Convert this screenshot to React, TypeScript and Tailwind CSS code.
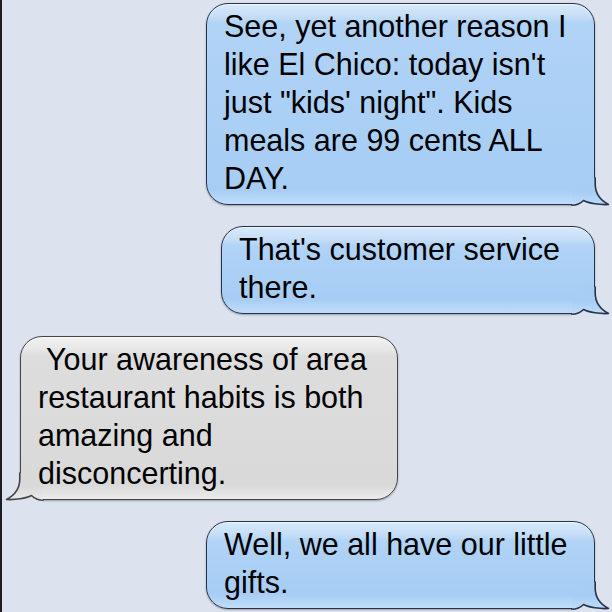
import React from "react";

type Kind = "sent" | "received";

const palette = {
  sent: {
    stroke: "#27334b",
    mid: "#a7cdf4",
    bottom: "#c0ddfa",
  },
  received: {
    stroke: "#444444",
    mid: "#d9d9d9",
    bottom: "#ececec",
  },
};

// curl drawn over the bottom corner; coords: x=26 / y=34 is the bubble's outer edge
const Tail = ({ kind }: { kind: Kind }) => {
  const c = palette[kind];
  const id = `tail-${kind}`;
  return (
    <svg
      width="40"
      height="36"
      viewBox="0 0 40 36"
      className={
        kind === "sent"
          ? "absolute -right-[15.6px] -bottom-[3.6px]"
          : "absolute -left-[15.6px] -bottom-[3.6px] -scale-x-100"
      }
    >
      <defs>
        <linearGradient id={id} x1="0" y1="0" x2="0" y2="36" gradientUnits="userSpaceOnUse">
          <stop offset="0" stopColor={c.mid} />
          <stop offset="0.55" stopColor={c.mid} />
          <stop offset="0.94" stopColor={c.bottom} />
        </linearGradient>
      </defs>
      <path
        d="M2 36 L2 33.2 C7 33.2 10.5 31.5 13.5 28.5 C19 31.5 30 33 38.5 32.5 L40 36 Z"
        fill="#dce2ee"
      />
      <path
        d="M10 6 L25.2 6 L25.2 12 C25.2 20 28 27 38.5 32.5 C30 33 19 31.5 13.5 28.5 C10.5 31.5 7 33.2 2 33.2 L2 20 Z"
        fill={`url(#${id})`}
      />
      <path
        d="M25.2 6 L25.2 12 C25.2 20 28 27 38.5 32.5 C30 33 19 31.5 13.5 28.5 C10.5 31.5 7 33.2 2 33.2"
        fill="none"
        stroke={c.stroke}
        strokeWidth="1.6"
        strokeLinejoin="round"
        strokeLinecap="round"
      />
    </svg>
  );
};

const Bubble = ({ kind, lines, width, className = "" }: { kind: Kind; lines: string[]; width: string; className?: string }) => (
  <div
    className={
      (kind === "sent"
        ? "self-end mr-[17px] border-[#27334b] bg-[linear-gradient(180deg,#d8e9fa_0px,#c4ddf7_13px,#b0d3f6_19px,#a7cdf4_calc(100%_-_14px),#c0ddfa_100%)] "
        : "self-start ml-[18px] border-[#444444] bg-[linear-gradient(180deg,#f2f2f2_0px,#e6e6e6_13px,#dddddd_19px,#d9d9d9_calc(100%_-_14px),#ececec_100%)] ") +
      "relative rounded-[22px] border-[1.6px] pl-[17px] pt-[3px] pb-[7px] shadow-[0_1px_2px_rgba(0,0,0,0.3),inset_0_1px_0_rgba(255,255,255,0.6)] " +
      width +
      " " +
      className
    }
  >
    {lines.map((l, i) => (
      <div key={i} className="whitespace-pre">
        {l}
      </div>
    ))}
    <Tail kind={kind} />
  </div>
);

export default function App() {
  return (
    <div className="w-[612px] h-[612px] overflow-hidden bg-[#dce2ee] border-l-2 border-[#1e1e22] flex flex-col pt-[3px] gap-[21px] font-['Liberation_Sans',Arial,sans-serif] text-[30.5px] leading-[38px] text-black">
      <Bubble
        kind="sent"
        width="w-[389px]"
        lines={[
          "See, yet another reason I",
          "like El Chico: today isn't",
          'just "kids\' night". Kids',
          "meals are 99 cents ALL",
          "DAY.",
        ]}
      />
      <Bubble kind="sent" width="w-[374px]" lines={["That's customer service", "there."]} />
      <Bubble
        kind="received"
        width="w-[378px]"
        className="mt-[1px]"
        lines={[" Your awareness of area", "restaurant habits is both", "amazing and", "disconcerting."]}
      />
      <Bubble kind="sent" width="w-[389px]" lines={["Well, we all have our little", "gifts."]} />
    </div>
  );
}
